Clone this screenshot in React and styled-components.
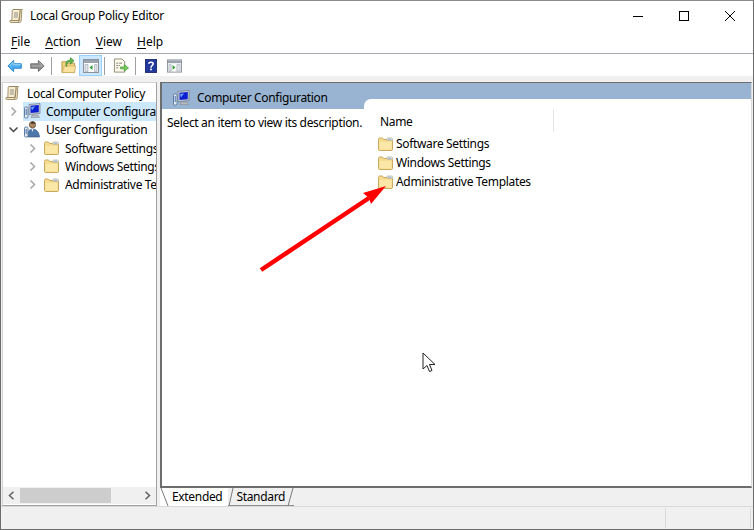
import React from "react";
import styled, { createGlobalStyle } from "styled-components";

const Global = createGlobalStyle`
  html, body { margin: 0; padding: 0; background: #fff; }
  body { font-family: "Noto Sans", "Open Sans", sans-serif; font-size: 12px; color: #000; letter-spacing: -0.33px; }
`;

const ScrollIcon = ({ size = 16 }) => (
  <svg width={size} height={size} viewBox="0 0 16 16">
    <path d="M4 1.500h9.500c-1 1-1 2-.8 3.500l-.6 8c0 1-.8 1.500-1.600 1.500H2c-1 0-1.500-1-1-2h8.500l.2 1 .6-.8L11 3c0-1-.5-1.500-1-1.500H4z" fill="#f5e6bd" stroke="#8a7a55" strokeWidth=".8" />
    <path d="M4 1.500c-1 .3-1 1.500-.8 2.500l-.4 8.500h7L11 3c0-1-.5-1.500-1-1.500z" fill="#f8edcf" stroke="#8a7a55" strokeWidth=".8" />
    <path d="M5 5h4M5 7h4M4.800 9h4" stroke="#777" strokeWidth=".8" />
  </svg>
);

const Folder = () => (
  <svg width="15" height="14" viewBox="0 0 15 14">
    <path d="M.5 2.500c0-1 .5-1.500 1-1.500h3l1 1.500h7c1 0 2 .3 2 1.500v8.500c0 .6-.4 1-1 1h-12c-.6 0-1-.4-1-1z" fill="#f6dc8e" stroke="#c9a95d" />
    <path d="M1.500 5h12v7.500h-12z" fill="#fbe7a8" />
    <path d="M9 1h4.500c.6 0 1 .4 1 1v1.500H9z" fill="#fff" stroke="#b9ad8a" strokeWidth=".7" />
    <path d="M10 2.200h3.500" stroke="#7f9fc9" />
  </svg>
);

const ComputerIcon = () => (
  <svg width="18" height="16" viewBox="0 0 18 16">
    <path d="M6 1.500 17 .5v10l-11 1z" fill="#cfd4dc" stroke="#6c7480" strokeWidth=".7" />
    <path d="M7.500 2.800 15.800 2v7.200l-8.300.7z" fill="#0b1fd0" />
    <path d="M8 4l4-.4-3 4z" fill="#6fa3f5" />
    <path d="M9 12h6l1.500 2.500H8z" fill="#b7bcc4" stroke="#7c838c" strokeWidth=".5" />
    <rect x="1.500" y="4" width="3.500" height="11" rx="1.200" fill="#e6e9ee" stroke="#5f7da3" />
    <path d="M3.200 6v6" stroke="#3e6fb0" />
  </svg>
);

const UserIcon = () => (
  <svg width="18" height="17" viewBox="0 0 18 17">
    <circle cx="9.500" cy="3.800" r="3.200" fill="#a9845f" stroke="#4f3c2a" strokeWidth=".6" />
    <path d="M8 1c1-1 3.500-.8 4.500 1.500L8.500 3z" fill="#4a3a2b" />
    <path d="M4.500 16c0-5 1.500-8 5-8s6.500 2.500 7 8z" fill="#4f78aa" stroke="#34557e" strokeWidth=".6" />
    <path d="M8.500 8l1 3 1-3z" fill="#eef2f8" />
    <rect x="1.500" y="6" width="3.500" height="10" rx="1.200" fill="#e6e9ee" stroke="#5f7da3" />
    <path d="M3.200 8v5" stroke="#3e6fb0" />
  </svg>
);

const Chevron = ({ open, dark }) => (
  <svg width="9" height="9" viewBox="0 0 9 9">
    <path d={open ? "M.5 2.500 4.500 6.500 8.500 2.500" : "M2.500.5 6.500 4.500 2.500 8.500"} fill="none" stroke={dark ? "#444" : "#a6a6a6"} strokeWidth="1.500" />
  </svg>
);

const BackArrow = () => (
  <svg width="17" height="14" viewBox="0 0 17 14">
    <path d="M7.500.7 1 7l6.500 6.300V9.500h8.700v-5H7.500z" fill="#4fb0ee" stroke="#1877c4" />
    <path d="M2.500 7 7 3v2.500h8.500" fill="none" stroke="#a6dcfb" />
  </svg>
);

const ForwardArrow = () => (
  <svg width="17" height="14" viewBox="0 0 17 14">
    <path d="M9.500.7 16 7l-6.500 6.300V9.500H.8v-5h8.700z" fill="#8d8d8d" stroke="#666" />
    <path d="M10.500 3 14.500 7H1.800" fill="none" stroke="#b4b4b4" />
  </svg>
);

const FolderUp = () => (
  <svg width="16" height="17" viewBox="0 0 16 17">
    <path d="M1 4.500h5l1 1.500h7.500v10H1z" fill="#f4d27c" stroke="#b8974c" />
    <path d="M1.500 16l2-7h12l-1 7z" fill="#f9e19f" stroke="#c9a95d" strokeWidth=".7" />
    <path d="M6 10c0-4 1.500-5.500 4-5.500V7l4-3.500L10 0v2.500C6 2.500 4 5.500 6 10z" fill="#5cb84a" stroke="#32832a" strokeWidth=".6" />
  </svg>
);

const ShowTree = () => (
  <svg width="16" height="14" viewBox="0 0 16 14">
    <rect x=".5" y=".5" width="15" height="13" fill="#fff" stroke="#8b929b" />
    <rect x="1" y="1" width="14" height="3" fill="#9aa3ae" />
    <path d="M2 5.500h3v7H2zM11.500 5.500h2.500v7h-2.500z" fill="#dfe3e8" stroke="#9aa3ae" strokeWidth=".6" />
    <path d="M9.500 6v5L6.500 8.500z" fill="#2e9a34" />
  </svg>
);

const ExportList = () => (
  <svg width="17" height="16" viewBox="0 0 17 16">
    <path d="M1.500.5h8l3 3v11h-11z" fill="#fdf9ea" stroke="#8f8a78" />
    <path d="M3.500 5h2M3.500 7.500h2M3.500 10h2M6.500 5h3M6.500 7.500h1" stroke="#777" />
    <path d="M8 9h4V6.500l4.500 3.500-4.500 3.500V11H8z" fill="#77c95e" stroke="#3f9a34" strokeWidth=".7" />
  </svg>
);

const HelpIcon = () => (
  <svg width="14" height="16" viewBox="0 0 14 16">
    <rect x=".5" y=".5" width="13" height="15" fill="#23389c" stroke="#16246c" />
    <path d="M4.500 5.500C4.500 3 9.500 3 9.500 5.500 9.500 7.500 7 7.500 7 10" fill="none" stroke="#fff" strokeWidth="1.800" />
    <rect x="6" y="11" width="2" height="2" fill="#fff" />
  </svg>
);

const ShowAction = () => (
  <svg width="16" height="14" viewBox="0 0 16 14">
    <rect x=".5" y=".5" width="15" height="13" fill="#fff" stroke="#8b929b" />
    <rect x="1" y="1" width="14" height="3" fill="#9aa3ae" />
    <path d="M2 5.500h2.500v7H2zM10.500 5.500H14v7h-3.500z" fill="#dfe3e8" stroke="#9aa3ae" strokeWidth=".6" />
    <path d="M6 6v5l3-2.500z" fill="#2e9a34" />
  </svg>
);

const Window = styled.div`
  width: 754px;
  height: 530px;
  box-sizing: border-box;
  position: relative;
  display: flex;
  flex-direction: column;
  border: 1px solid #6d6d6d;
  border-top-color: #8a8a8a;
  background: #fff;
  overflow: hidden;
`;

const TitleBar = styled.div`
  height: 29px;
  display: flex;
  align-items: center;
  padding-left: 8px;
  background: #fff;
  flex: none;
`;

const TitleText = styled.span`
  flex: 1;
  margin-left: 5px;
  letter-spacing: -0.25px;
`;

const WindowControl = styled.div`
  width: 46px;
  height: 29px;
  display: flex;
  align-items: center;
  justify-content: center;
`;

const MenuBar = styled.div`
  height: 23px;
  display: flex;
  align-items: center;
  gap: 15px;
  padding: 0 0 0 10px;
  letter-spacing: 0;
  border-bottom: 1px solid #a8a8b0;
  flex: none;
`;

const MenuItem = styled.span`
  u { text-underline-offset: 2px; }
`;

const Toolbar = styled.div`
  height: 22px;
  box-sizing: border-box;
  display: flex;
  align-items: center;
  padding: 1px 0 0 5px;
  background: #fff;
  flex: none;
`;

const ToolIcon = styled.div`
  height: 21px;
  width: ${(p) => p.$w}px;
  margin-right: ${(p) => p.$gap || 0}px;
  display: flex;
  align-items: center;
  justify-content: center;
  box-sizing: border-box;
  background: ${(p) => (p.$active ? "#cce8ff" : "transparent")};
  border: 1px solid ${(p) => (p.$active ? "#99d1ff" : "transparent")};
`;

const ToolSep = styled.div`
  width: 1px;
  height: 18px;
  background: #a0a0a0;
  margin-right: ${(p) => p.$gap}px;
`;

const Panes = styled.div`
  flex: 1;
  min-height: 0;
  display: flex;
  gap: 3px;
  padding: 6px 1px 0 1px;
  background: #f0f0f0;
  border-bottom: 1px solid #d9d9d9;
`;

const TreePane = styled.div`
  width: 155px;
  box-sizing: border-box;
  background: #fff;
  border: 1px solid #a0a0a0;
  border-top-color: #d4d4d4;
  border-left-color: #d4d4d4;
  display: flex;
  flex-direction: column;
  flex: none;
`;

const TreeList = styled.div`
  flex: 1;
  min-height: 0;
  padding-top: 1px;
  overflow: hidden;
`;

const TreeRow = styled.div`
  height: 18.300px;
  display: flex;
  align-items: center;
  padding-left: ${(p) => p.$indent}px;
  white-space: nowrap;
  overflow: hidden;
`;

const Twisty = styled.span`
  width: 14px;
  flex: none;
  display: flex;
  align-items: center;
  justify-content: center;
  margin-right: 3px;
`;

const TreeIcon = styled.span`
  width: 18px;
  height: 16px;
  flex: none;
  display: flex;
  align-items: center;
  justify-content: center;
`;

const TreeLabel = styled.span`
  margin-left: 5px;
  flex: 1;
  align-self: stretch;
  display: flex;
  align-items: center;
  overflow: hidden;
`;

const SelectedWrap = styled.div`
  display: flex;
  flex: 1;
  align-items: center;
  align-self: stretch;
  background: #cce8ff;
  overflow: hidden;
  min-width: 0;
`;

const HScroll = styled.div`
  height: 17px;
  margin-bottom: 1px;
  display: flex;
  align-items: center;
  background: #f0f0f0;
  flex: none;
`;

const ScrollBtn = styled.div`
  width: 17px;
  height: 17px;
  display: flex;
  align-items: center;
  justify-content: center;
  flex: none;
`;

const ScrollTrack = styled.div`
  flex: 1;
  height: 17px;
`;

const ScrollThumb = styled.div`
  width: 91px;
  height: 15px;
  margin-top: 1px;
  background: #cdcdcd;
`;

const RightPane = styled.div`
  flex: 1;
  display: flex;
  flex-direction: column;
  min-width: 0;
`;

const ContentFrame = styled.div`
  flex: 1;
  min-height: 0;
  background: #fff;
  border: 1px solid #d9d9d9;
  border-top: 1px solid #6d6d6d;
  border-left: 2px solid #6d6d6d;
  border-bottom: 2px solid #6d6d6d;
  display: flex;
  flex-direction: column;
`;

const PaneHeader = styled.div`
  height: 26px;
  background: #98b4d2;
  display: flex;
  align-items: flex-start;
  padding: 7px 0 0 10px;
  box-sizing: border-box;
  gap: 7px;
  flex: none;
`;

const HeaderIcon = styled.span`
  display: block;
  height: 16px;
`;

const HeaderTitle = styled.span`
  line-height: 16px;
`;

const Body = styled.div`
  flex: 1;
  min-height: 0;
  margin-top: -10px;
  display: flex;
`;

const Description = styled.div`
  width: 202px;
  padding: 15px 0 0 5px;
  box-sizing: border-box;
  flex: none;
  white-space: nowrap;
`;

const ListArea = styled.div`
  flex: 1;
  background: #fff;
  border-top-left-radius: 7px;
`;

const ColumnHead = styled.div`
  width: 190px;
  height: 23px;
  margin-top: 10px;
  box-sizing: border-box;
  padding: 5px 0 0 16px;
  border-right: 1px solid #e5e5e5;
  line-height: 16px;
`;

const ListRows = styled.div`
  padding: 2px 0 0 14px;
`;

const ListRow = styled.div`
  height: 19px;
  display: flex;
  align-items: center;
  gap: 3px;
`;

const TabStrip = styled.div`
  height: 18px;
  display: flex;
  align-items: flex-start;
  flex: none;
`;

const Tab = styled.div`
  height: 18px;
  box-sizing: border-box;
  display: flex;
  align-items: center;
  gap: ${(p) => (p.$active ? 3 : 2)}px;
  background: ${(p) => (p.$active ? "#fff" : "#f0f0f0")};
  border-bottom: 1px solid ${(p) => (p.$active ? "#fff" : "#8f8f8f")};
  padding: 0 ${(p) => (p.$active ? 6 : 0)}px 0 0;
`;

const Slant = styled.svg`
  flex: none;
  display: block;
`;

const TabEdge = ({ flip, w = 9 }) => (
  <Slant width={w} height="18" viewBox={`0 0 ${w} 18`}>
    <path d={flip ? `M${w - 1} 0 1 18` : `M1 0 ${w - 1} 18`} stroke="#7a7a7a" fill="none" />
  </Slant>
);

const StatusBar = styled.div`
  height: 22px;
  display: flex;
  justify-content: flex-end;
  padding-right: 2px;
  background: #f0f0f0;
  flex: none;
`;

const StatusCell = styled.div`
  width: ${(p) => p.$w}px;
  margin: 1px 0;
  border-right: 1px solid #d9d9d9;
  box-sizing: border-box;
`;

const Overlay = styled.svg`
  position: absolute;
  left: ${(p) => p.$x}px;
  top: ${(p) => p.$y}px;
  pointer-events: none;
`;

const menus = [
  ["F", "ile"],
  ["A", "ction"],
  ["V", "iew"],
  ["H", "elp"],
];

const groups = ["Software Settings", "Windows Settings", "Administrative Templates"];

export default function App() {
  return (
    <>
      <Global />
      <Window>
        <TitleBar>
          <ScrollIcon />
          <TitleText>Local Group Policy Editor</TitleText>
          <WindowControl>
            <svg width="10" height="10" viewBox="0 0 10 10"><path d="M0 5.500h10" stroke="#000" /></svg>
          </WindowControl>
          <WindowControl>
            <svg width="10" height="10" viewBox="0 0 10 10"><rect x=".5" y=".5" width="9" height="9" fill="none" stroke="#000" /></svg>
          </WindowControl>
          <WindowControl>
            <svg width="10" height="10" viewBox="0 0 10 10"><path d="M0 0l10 10M10 0L0 10" stroke="#000" /></svg>
          </WindowControl>
        </TitleBar>
        <MenuBar>
          {menus.map(([k, rest]) => (
            <MenuItem key={k}><u>{k}</u>{rest}</MenuItem>
          ))}
        </MenuBar>
        <Toolbar>
          <ToolIcon $w={17} $gap={6}><BackArrow /></ToolIcon>
          <ToolIcon $w={17} $gap={5}><ForwardArrow /></ToolIcon>
          <ToolSep $gap={8} />
          <ToolIcon $w={17} $gap={2}><FolderUp /></ToolIcon>
          <ToolIcon $w={23} $gap={2} $active><ShowTree /></ToolIcon>
          <ToolSep $gap={7} />
          <ToolIcon $w={18} $gap={5}><ExportList /></ToolIcon>
          <ToolSep $gap={8} />
          <ToolIcon $w={14} $gap={8}><HelpIcon /></ToolIcon>
          <ToolIcon $w={17}><ShowAction /></ToolIcon>
        </Toolbar>
        <Panes>
          <TreePane>
            <TreeList>
              <TreeRow $indent={1}>
                <TreeIcon><ScrollIcon /></TreeIcon>
                <TreeLabel>Local Computer Policy</TreeLabel>
              </TreeRow>
              <TreeRow $indent={3}>
                <Twisty><Chevron /></Twisty>
                <SelectedWrap>
                  <TreeIcon><ComputerIcon /></TreeIcon>
                  <TreeLabel>Computer Configuration</TreeLabel>
                </SelectedWrap>
              </TreeRow>
              <TreeRow $indent={3}>
                <Twisty><Chevron open dark /></Twisty>
                <TreeIcon><UserIcon /></TreeIcon>
                <TreeLabel>User Configuration</TreeLabel>
              </TreeRow>
              {groups.map((g) => (
                <TreeRow key={g} $indent={22}>
                  <Twisty><Chevron /></Twisty>
                  <TreeIcon><Folder /></TreeIcon>
                  <TreeLabel>{g}</TreeLabel>
                </TreeRow>
              ))}
            </TreeList>
            <HScroll>
              <ScrollBtn>
                <svg width="7" height="9" viewBox="0 0 7 9"><path d="M5.500.8 1.500 4.500l4 3.700" fill="none" stroke="#606060" strokeWidth="1.500" /></svg>
              </ScrollBtn>
              <ScrollTrack><ScrollThumb /></ScrollTrack>
              <ScrollBtn>
                <svg width="7" height="9" viewBox="0 0 7 9"><path d="M1.500.8l4 3.700-4 3.700" fill="none" stroke="#606060" strokeWidth="1.500" /></svg>
              </ScrollBtn>
            </HScroll>
          </TreePane>
          <RightPane>
            <ContentFrame>
              <PaneHeader>
                <HeaderIcon><ComputerIcon /></HeaderIcon>
                <HeaderTitle>Computer Configuration</HeaderTitle>
              </PaneHeader>
              <Body>
                <Description>Select an item to view its description.</Description>
                <ListArea>
                  <ColumnHead>Name</ColumnHead>
                  <ListRows>
                    {groups.map((g) => (
                      <ListRow key={g}><Folder />{g}</ListRow>
                    ))}
                  </ListRows>
                </ListArea>
              </Body>
            </ContentFrame>
            <TabStrip>
              <Tab $active><TabEdge />Extended</Tab>
              <Tab><TabEdge flip w={6} />Standard<TabEdge flip w={7} /></Tab>
            </TabStrip>
          </RightPane>
        </Panes>
        <StatusBar>
          <StatusCell $w={10} />
          <StatusCell $w={85} />
        </StatusBar>
        <Overlay $x={255} $y={183} width="135" height="92" viewBox="0 0 135 92">
          <path d="M5 86 113 14" stroke="#fe0000" strokeWidth="4.500" fill="none" />
          <path d="M130 2 107 9 113 14 115 20z" fill="#fe0000" />
        </Overlay>
        <Overlay $x={420} $y={351} width="16" height="22" viewBox="0 0 16 22">
          <path d="M2 1v16l4-3.500 2.500 6 2.500-1-2.500-6H14z" fill="#fff" stroke="#222" strokeWidth="1" />
        </Overlay>
      </Window>
    </>
  );
}
